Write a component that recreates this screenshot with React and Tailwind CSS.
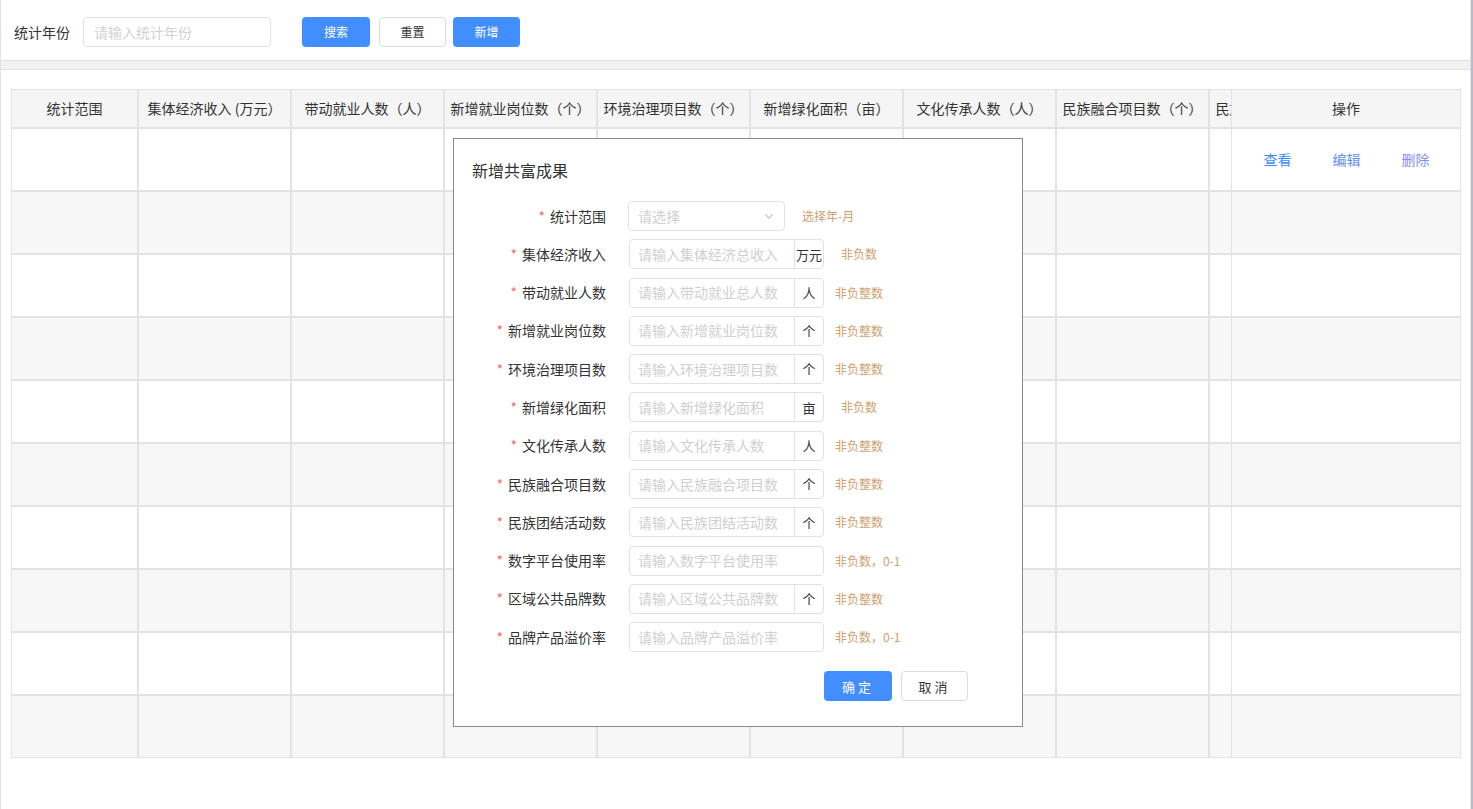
import React from 'react';

const columns = [
  { title: '统计范围', w: 'w-[127px]' },
  { title: '集体经济收入 (万元）', w: 'w-[153px]' },
  { title: '带动就业人数（人）', w: 'w-[153px]' },
  { title: '新增就业岗位数（个）', w: 'w-[153px]' },
  { title: '环境治理项目数（个）', w: 'w-[153px]' },
  { title: '新增绿化面积（亩）', w: 'w-[153px]' },
  { title: '文化传承人数（人）', w: 'w-[153px]' },
  { title: '民族融合项目数（个）', w: 'w-[153px]' },
  { title: '民族团结活动数（个）', w: 'w-[153px]' },
];

const fields = [
  { label: '统计范围', select: true, hint: '选择年-月' },
  { label: '集体经济收入', ph: '请输入集体经济总收入', unit: '万元', hint: '非负数' },
  { label: '带动就业人数', ph: '请输入带动就业总人数', unit: '人', hint: '非负整数' },
  { label: '新增就业岗位数', ph: '请输入新增就业岗位数', unit: '个', hint: '非负整数' },
  { label: '环境治理项目数', ph: '请输入环境治理项目数', unit: '个', hint: '非负整数' },
  { label: '新增绿化面积', ph: '请输入新增绿化面积', unit: '亩', hint: '非负数' },
  { label: '文化传承人数', ph: '请输入文化传承人数', unit: '人', hint: '非负整数' },
  { label: '民族融合项目数', ph: '请输入民族融合项目数', unit: '个', hint: '非负整数' },
  { label: '民族团结活动数', ph: '请输入民族团结活动数', unit: '个', hint: '非负整数' },
  { label: '数字平台使用率', ph: '请输入数字平台使用率', hint: '非负数，0-1' },
  { label: '区域公共品牌数', ph: '请输入区域公共品牌数', unit: '个', hint: '非负整数' },
  { label: '品牌产品溢价率', ph: '请输入品牌产品溢价率', hint: '非负数，0-1' },
];

const rows = Array.from({ length: 10 }, (_, i) => i);

function TableRow({ header, index }) {
  const bg = header ? 'bg-[#f5f5f5]' : index % 2 === 1 ? 'bg-[#f7f7f7]' : 'bg-white';
  const h = header ? 'h-[39px]' : 'h-[63px]';
  return (
    <div className={`flex ${h}`}>
      <div className="w-[1220px] overflow-hidden flex shrink-0">
        {columns.map((c) => (
          <div
            key={c.title}
            className={`${c.w} ${bg} shrink-0 border border-[#e3e3e3] flex items-center justify-center whitespace-nowrap overflow-hidden text-[14px] text-[#333]`}
          >
            {header ? c.title : ''}
          </div>
        ))}
      </div>
      <div className={`w-[230px] shrink-0 ${bg} border border-[#e3e3e3] flex items-center justify-center text-[14px]`}>
        {header && <span className="text-[#333]">操作</span>}
        {!header && index === 0 && (
          <div className="flex gap-[41px] pl-[1px]">
            <span className="text-[#3d8bf8]">查看</span>
            <span className="text-[#5f8ef2]">编辑</span>
            <span className="text-[#858ef4]">删除</span>
          </div>
        )}
      </div>
    </div>
  );
}

function FormRow({ f }) {
  return (
    <div className="flex items-center h-[30px]">
      <div className="w-[152px] text-right text-[14px] text-[#333] whitespace-nowrap">
        <span className="text-[#f56c6c] mr-[5px]">*</span>
        {f.label}
      </div>
      {f.select ? (
        <>
          <div className="ml-[22px] w-[157px] h-[30px] border border-[#e2e2e2] rounded-[4px] flex items-center justify-between pl-[9px] pr-[9px]">
            <span className="text-[14px] text-[#cfcfcf]">请选择</span>
            <svg width="12" height="12" viewBox="0 0 12 12" fill="none">
              <path d="M2.5 4.5L6 8L9.5 4.5" stroke="#c0c0c0" strokeWidth="1.1" />
            </svg>
          </div>
          <span className="ml-[17px] text-[12px] text-[#d0a06e] whitespace-nowrap">{f.hint}</span>
        </>
      ) : (
        <>
          <div className="ml-[23px] w-[195px] h-[30px] border border-[#e2e2e2] rounded-[4px] flex overflow-hidden">
            <input
              placeholder={f.ph}
              className="flex-1 min-w-0 pl-[8px] text-[14px] outline-none placeholder:text-[#cfcfcf] bg-transparent"
            />
            {f.unit && (
              <div className="w-[29px] shrink-0 border-l border-[#e2e2e2] flex items-center justify-center text-[13px] text-[#333] whitespace-nowrap">
                {f.unit}
              </div>
            )}
          </div>
          <span className="ml-[11px] inline-block min-w-[48px] text-center text-[12px] text-[#d0a06e] whitespace-nowrap">
            {f.hint}
          </span>
        </>
      )}
    </div>
  );
}

export default function App() {
  return (
    <div className="relative w-[1473px] h-[809px] overflow-hidden bg-white font-['Noto_Sans_CJK_SC','Liberation_Sans',sans-serif] leading-normal">
      <div className="flex h-full">
        <div className="w-[1471px] h-full flex flex-col border-l border-r border-[#e2e2e2]">
          {/* search bar */}
          <div className="h-[60px] shrink-0 flex items-center pl-[13px] pt-[4px]">
            <span className="text-[14px] text-[#333]">统计年份</span>
            <input
              placeholder="请输入统计年份"
              className="ml-[13px] w-[188px] h-[30px] border border-[#e2e2e2] rounded-[4px] pl-[10px] text-[14px] outline-none placeholder:text-[#d2d2d2]"
            />
            <button className="ml-[31px] w-[68px] h-[30px] rounded-[4px] bg-[#428eff] text-white text-[12px]">搜索</button>
            <button className="ml-[9px] w-[67px] h-[30px] rounded-[4px] border border-[#dcdcdc] bg-white text-[#333] text-[12px]">重置</button>
            <button className="ml-[7px] w-[67px] h-[30px] rounded-[4px] bg-[#428eff] text-white text-[12px]">新增</button>
          </div>
          <div className="h-[10px] shrink-0 bg-[#f2f2f2] border-y border-[#e0e0e0]" />
          {/* table */}
          <div className="flex-1 pt-[19px] pl-[10px]">
            <TableRow header />
            {rows.map((i) => (
              <TableRow key={i} index={i} />
            ))}
          </div>
        </div>
        <div className="w-[2px] h-full bg-[#b7bbca]" />
      </div>

      {/* dialog */}
      <div className="absolute left-[453px] top-[138px] w-[570px] h-[589px] bg-white border border-[#8a8a8a]">
        <div className="pl-[18px] pt-[19px] text-[16px] text-[#333] leading-[24px]">新增共富成果</div>
        <div className="mt-[19px] flex flex-col gap-[8.3px]">
          {fields.map((f) => (
            <FormRow key={f.label} f={f} />
          ))}
        </div>
        <div className="mt-[19px] flex justify-end pr-[54px] gap-[9px]">
          <button className="w-[68px] h-[30px] rounded-[4px] bg-[#428eff] text-white text-[13px] tracking-[3px]">确定</button>
          <button className="w-[67px] h-[30px] rounded-[4px] border border-[#dcdcdc] bg-white text-[#333] text-[13px] tracking-[3px]">取消</button>
        </div>
      </div>
    </div>
  );
}
